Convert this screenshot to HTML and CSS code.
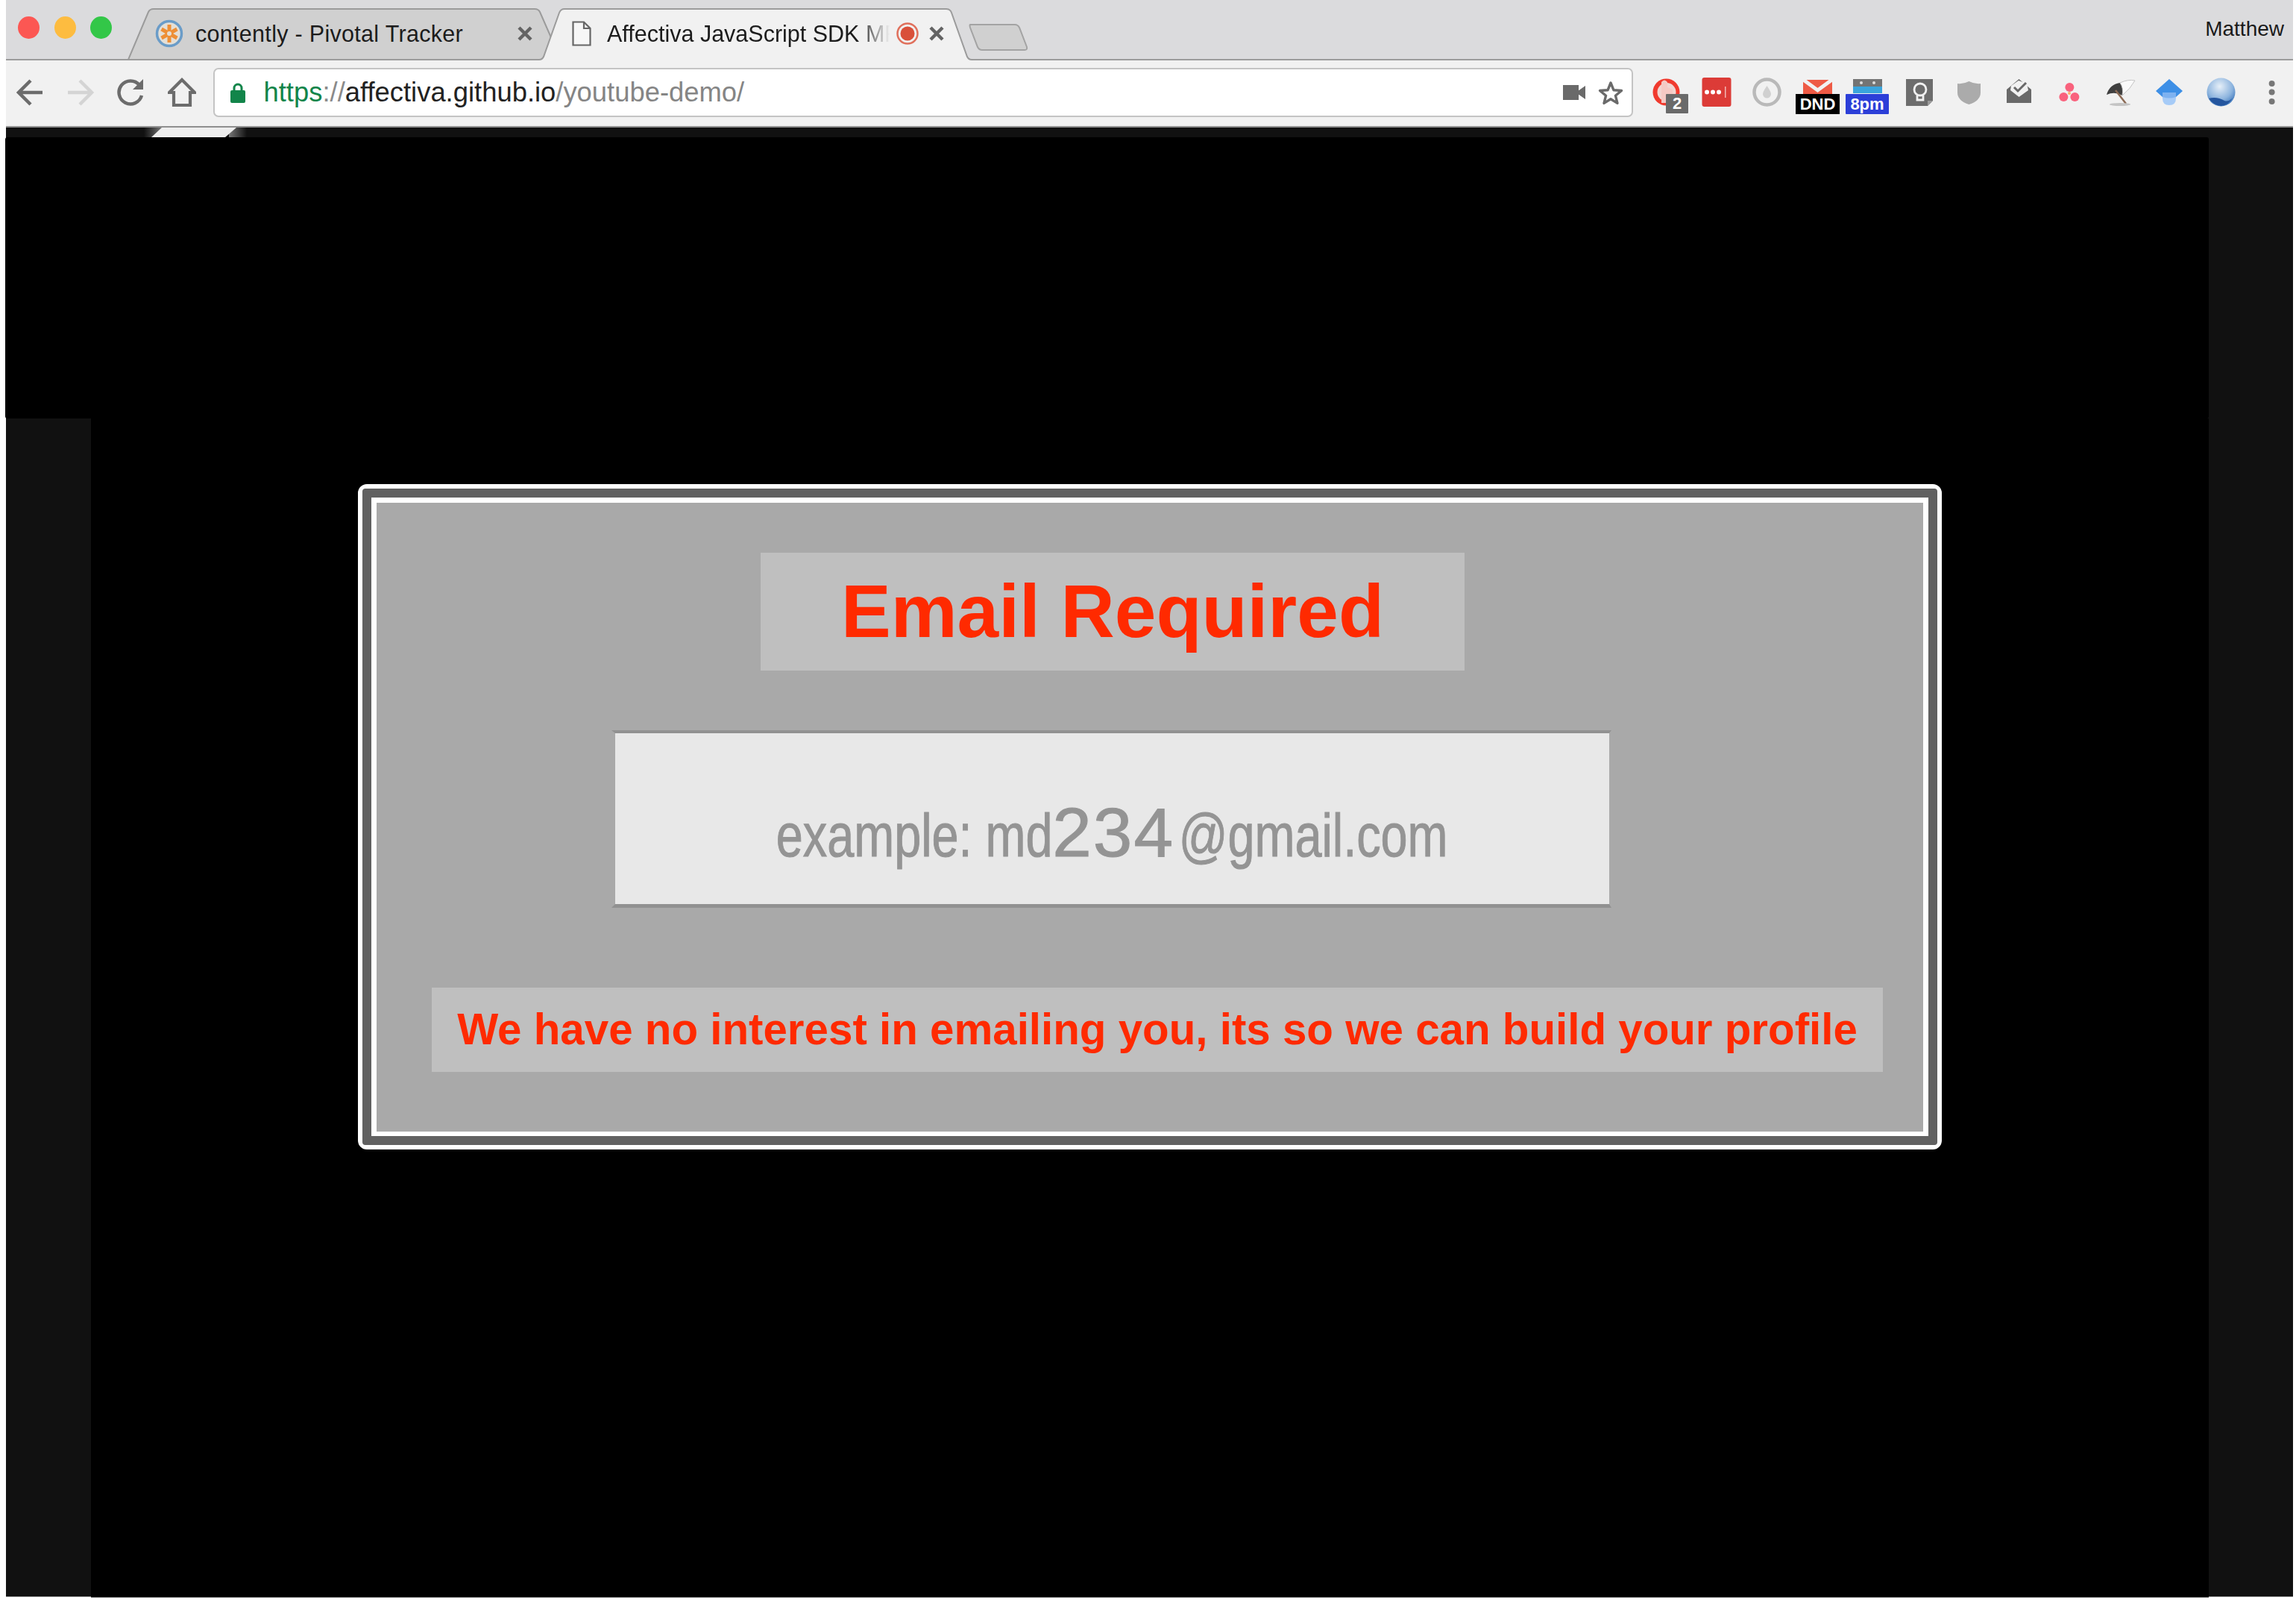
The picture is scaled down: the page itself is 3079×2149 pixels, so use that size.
FILE: index.html
```html
<!DOCTYPE html>
<html lang="en">
<head>
  <meta charset="UTF-8" />
  <title>Affectiva JavaScript SDK</title>
  <link rel="stylesheet" href="styles.css">
</head>
<body>
  <div class="window">
    <!-- tab strip -->
    <div class="tabstrip">
      <div class="lights">
        <span class="light light-red"></span>
        <span class="light light-amber"></span>
        <span class="light light-green"></span>
      </div>
      <div class="tab tab-back">
        <svg class="tab-shape" width="582" height="69" viewBox="0 0 582 69"><path d="M1 69 L28 5 Q30 1 35 1 L546 1 Q551 1 553 5 L581 69 Z" fill="#d0d0d0" stroke="#9b9b9b" stroke-width="2"/></svg>
        <svg class="favicon" width="38" height="40" viewBox="0 0 38 40">
          <circle cx="19" cy="20" r="16.5" fill="#e4dfd6" stroke="#6a9cc8" stroke-width="3.5"/>
          <g stroke="#ee8f35" stroke-width="5">
            <path d="M19 8 V32"/><path d="M8.600 14 L29.400 26"/><path d="M8.600 26 L29.400 14"/>
          </g>
          <circle cx="19" cy="20" r="3" fill="#e4dfd6"/>
        </svg>
        <span class="tab-title">contently - Pivotal Tracker</span>
        <svg class="tab-close tab-close-back" width="20" height="20" viewBox="0 0 20 20"><path d="M2 2 L18 18 M18 2 L2 18" stroke="#636363" stroke-width="4.500"/></svg>
      </div>
      <div class="tab tab-active">
        <svg class="tab-shape" width="584" height="70" viewBox="0 0 584 70"><path d="M0 69 L2 69 Q6 69 8 65 L29 6 Q31 1 36 1 L548 1 Q553 1 555 6 L576 65 Q578 69 582 69 L584 69 L584 70 L0 70 Z" fill="#f1f1f1"/><path d="M0 69 L2 69 Q6 69 8 65 L29 6 Q31 1 36 1 L548 1 Q553 1 555 6 L576 65 Q578 69 582 69 L584 69" fill="none" stroke="#9b9b9b" stroke-width="2"/></svg>
        <svg class="doc-icon" width="26" height="34" viewBox="0 0 26 34"><path d="M1.500 1.500 H16 L24.500 10 V32.500 H1.500 Z M16 1.500 V10 H24.500" fill="#f7f7f7" stroke="#666" stroke-width="2.200"/></svg>
        <span class="tab-title tab-title-fade">Affectiva JavaScript SDK MF</span>
        <svg class="rec-icon" width="30" height="32" viewBox="0 0 30 32"><circle cx="15" cy="16" r="13.500" fill="none" stroke="#e0705c" stroke-width="2.500"/><circle cx="15" cy="16" r="9.500" fill="#d9503a"/></svg>
        <svg class="tab-close tab-close-active" width="20" height="20" viewBox="0 0 20 20"><path d="M2 2 L18 18 M18 2 L2 18" stroke="#636363" stroke-width="4.500"/></svg>
      </div>
      <svg class="new-tab" width="80" height="38" viewBox="0 0 80 38"><path d="M2 2 L62 2 Q66 2 68 6 L78 32 Q79 36 75 36 L18 36 Q14 36 12 32 L2 6 Q1 2 2 2 Z" fill="#d0d0d0" stroke="#a3a3a3" stroke-width="2"/></svg>
      <span class="profile-name">Matthew</span>
    </div>

    <!-- toolbar -->
    <div class="toolbar">
      <div class="nav-buttons">
        <svg class="nav-btn" width="38" height="40" viewBox="0 0 38 40"><path d="M35 20 H5 M19 4 L3 20 L19 36" fill="none" stroke="#6c6c6c" stroke-width="4.500"/></svg>
        <svg class="nav-btn" width="38" height="40" viewBox="0 0 38 40"><path d="M1 20 H31 M17 4 L33 20 L17 36" fill="none" stroke="#d4d4d4" stroke-width="4.500"/></svg>
        <svg class="nav-btn" width="38" height="40" viewBox="0 0 38 40"><path d="M30 10 A15.500 15.500 0 1 0 33 24" fill="none" stroke="#6c6c6c" stroke-width="4.500"/><path d="M35 2 V16 H21 Z" fill="#6c6c6c"/></svg>
        <svg class="nav-btn" width="38" height="40" viewBox="0 0 38 40"><path d="M19 3 L36 20 H30 V37 H8 V20 H2 Z" fill="none" stroke="#6c6c6c" stroke-width="4.200"/></svg>
      </div>
      <div class="omnibox">
        <svg class="lock" width="20" height="28" viewBox="0 0 20 28"><path d="M5 12 V8 A5 5 0 0 1 15 8 V12" fill="none" stroke="#12854a" stroke-width="3"/><rect x="0" y="11" width="20" height="17" rx="2" fill="#12854a"/></svg>
        <span class="url"><span class="url-scheme">https</span><span class="url-sep">://</span><span class="url-host">affectiva.github.io</span><span class="url-path">/youtube-demo/</span></span>
        <svg class="omni-icon" width="30" height="20" viewBox="0 0 30 20"><rect x="0" y="0" width="21" height="20" fill="#6a6a6a"/><path d="M20 8 L30 1 V19 L20 12 Z" fill="#6a6a6a"/></svg>
        <svg class="omni-icon" width="34" height="33" viewBox="0 0 34 33"><path d="M17 3 L21 12.800 L31.500 13.500 L23.400 20.200 L26 30.400 L17 24.800 L8 30.400 L10.600 20.200 L2.500 13.500 L13 12.800 Z" fill="none" stroke="#6a6a6a" stroke-width="3.400" stroke-linejoin="round"/></svg>
      </div>
      <div class="extensions">
        <svg class="ext" viewBox="0 0 40 60"><circle cx="19.500" cy="29.500" r="18" fill="#f03a2e"/><circle cx="20" cy="29.500" r="12.500" fill="#f1d5d1"/><path d="M13 44 V16 Q17 11 21 16 V23 L28 26 V38 L22 44 Z" fill="#f4c9c4"/><rect x="19" y="32" width="30" height="26" rx="1" fill="#6a6a6a"/><text class="ext-badge-num" x="34" y="52">2</text></svg>
        <svg class="ext" viewBox="0 0 40 60"><rect x="0.500" y="10" width="39" height="39" rx="3" fill="#dc3b37"/><circle cx="7" cy="29.500" r="3" fill="#fff"/><circle cx="15" cy="29.500" r="3" fill="#fff"/><circle cx="23" cy="29.500" r="3" fill="#fff"/><rect x="31" y="22" width="1.500" height="15" fill="#f3b5b2"/></svg>
        <svg class="ext" viewBox="0 0 40 60"><circle cx="19.500" cy="29.500" r="17" fill="none" stroke="#b9b9b9" stroke-width="4.500"/><path d="M19.500 21 Q25 29 25 32 A5.500 5.500 0 0 1 14 32 Q14 29 19.500 21 Z" fill="#d0d0d0"/></svg>
        <svg class="ext" viewBox="0 0 40 60"><rect x="0" y="13" width="39" height="19" fill="#ee5a45"/><path d="M-1 12 L19.500 27 L40 12" fill="none" stroke="#f1f1f1" stroke-width="5"/><rect x="-10" y="32" width="59" height="27" fill="#000"/><text class="ext-badge-text" x="19.500" y="53">DND</text></svg>
        <svg class="ext" viewBox="0 0 40 60"><rect x="0" y="12" width="39" height="10" fill="#747474"/><circle cx="11" cy="17" r="2" fill="#ddd"/><circle cx="28" cy="17" r="2" fill="#ddd"/><rect x="0" y="22" width="39" height="9" fill="#3aa4dc"/><rect x="-10" y="32" width="58" height="27" rx="1" fill="#2c3fd8"/><text class="ext-badge-text" x="19" y="53">8pm</text></svg>
        <svg class="ext" viewBox="0 0 40 60"><path d="M3 12 H39 V41 L32 48 H3 Z" fill="#6d6d6d"/><path d="M32 48 V41 H39 Z" fill="#9a9a9a"/><circle cx="22" cy="26" r="8" fill="none" stroke="#f1f1f1" stroke-width="2.800"/><path d="M18 34 V40 H26 V34" fill="none" stroke="#f1f1f1" stroke-width="2.800"/></svg>
        <svg class="ext" viewBox="0 0 40 60"><path d="M19.500 15 Q27 19 35 18 V30 Q35 41 19.500 46 Q4 41 4 30 V18 Q12 19 19.500 15 Z" fill="#ababab"/></svg>
        <svg class="ext" viewBox="0 0 40 60"><path d="M3 26 L19.500 12 L36 26 V44 H3 Z" fill="#696969"/><path d="M9 21 L19 14 L30 18 L32 27 L19.500 36 L8 27 Z" fill="#f1f1f1"/><path d="M13 23 L18 28 L29 17" fill="none" stroke="#696969" stroke-width="3"/></svg>
        <svg class="ext" viewBox="0 0 40 60"><circle cx="19.400" cy="23" r="6" fill="#f9627d"/><circle cx="11.400" cy="36" r="6" fill="#f9627d"/><circle cx="26.400" cy="36" r="6" fill="#f9627d"/><circle cx="19" cy="31" r="2" fill="#fbb36a"/></svg>
        <svg class="ext" viewBox="0 0 40 60"><path d="M1 33 Q5 19 19 17 Q24 24 22 34 Q12 28 1 33 Z" fill="#3f3f3f"/><path d="M19 17 Q30 12 39 14 Q33 25 22 34 Q24 24 19 17 Z" fill="#fafafa" stroke="#c4c4c4"/><path d="M13 27 L27 45" stroke="#8b6a55" stroke-width="2.500"/><ellipse cx="19" cy="46" rx="14" ry="2" fill="#c4c4c4"/></svg>
        <svg class="ext" viewBox="0 0 40 60"><path d="M9 30 H27 V38 Q27 47 18 47 Q9 47 9 38 Z" fill="#a6cbf7"/><path d="M18 12 L36 28 L27 36 H9 L0 28 Z" fill="#3d8fe6"/><path d="M9 30 H27 V36 Q18 39 9 36 Z" fill="#7eb2f0"/></svg>
        <svg class="ext" viewBox="0 0 40 60"><defs><radialGradient id="globe-fill" cx="45%" cy="30%" r="70%"><stop offset="0" stop-color="#e6eff8"/><stop offset="0.65" stop-color="#8db4de"/><stop offset="1" stop-color="#3f78bd"/></radialGradient></defs><circle cx="19.500" cy="29.500" r="19" fill="url(#globe-fill)"/><path d="M3 38 Q14 35 24 41 Q30 43 35 37 Q30 47 19.500 48 Q9 47 3 38 Z" fill="#24559e"/></svg>
        <svg class="ext" viewBox="0 0 40 60"><circle cx="19.600" cy="18" r="4" fill="#777"/><circle cx="19.600" cy="29.500" r="4" fill="#777"/><circle cx="19.600" cy="42" r="4" fill="#777"/></svg>
      </div>
    </div>

    <!-- page content -->
    <div class="page">
      <div class="page-top">
        <svg class="tab-sliver" width="150" height="13" viewBox="0 0 150 13">
          <defs>
            <linearGradient id="sliver-left"><stop offset="0" stop-color="#111"/><stop offset="1" stop-color="#777"/></linearGradient>
            <linearGradient id="sliver-right"><stop offset="0" stop-color="#777"/><stop offset="1" stop-color="#111"/></linearGradient>
          </defs>
          <rect x="0" y="0" width="24" height="13" fill="url(#sliver-left)"/>
          <rect x="114" y="0" width="24" height="13" fill="url(#sliver-right)"/>
          <path d="M10 13 L24 0 H124 L109 13 Z" fill="#eeeeee"/>
        </svg>
      </div>
      <div class="hero"></div>
      <div class="stage">
        <div class="gutter gutter-left"></div>
        <main class="stage-main">
          <section class="modal">
            <div class="modal-frame">
              <div class="modal-body">
                <h1 class="modal-title">Email Required</h1>
                <div class="email-field"><span class="email-placeholder">example: md<span class="email-digits">234</span>@gmail.com</span></div>
                <p class="modal-note">We have no interest in emailing you, its so we can build your profile</p>
              </div>
            </div>
          </section>
        </main>
        <div class="gutter gutter-right"></div>
      </div>
    </div>
  </div>
</body>
</html>
```

FILE: styles.css
```css
body {
  margin: 0;
  height: 2149px;
  overflow: hidden;
  background-color: #fff;
  font-family: "Liberation Sans", Arial, sans-serif;
}
.window {
  width: 3067px;
  margin-left: 8px;
}

/* tab strip */
.tabstrip {
  box-sizing: border-box;
  height: 81px;
  display: flex;
  align-items: flex-end;
  background-color: #dbdbdd;
  border-bottom: 2px solid #9c9c9c;
}
.lights {
  display: flex;
  gap: 19.5px;
  align-self: flex-start;
  margin: 22px 0 0 16px;
}
.light {
  width: 29px;
  height: 30px;
  border-radius: 50%;
}
.light-red { background-color: #fc5753; }
.light-amber { background-color: #fdbc40; }
.light-green { background-color: #33c748; }
.tab {
  position: relative;
  height: 68px;
  display: flex;
  align-items: center;
  font-size: 30.5px;
  color: #1c1c1c;
}
.tab-shape {
  position: absolute;
  left: 0;
  top: 0;
}
.tab > *:not(.tab-shape) {
  position: relative;
}
.tab-back {
  width: 582px;
  margin-left: 21px;
}
.favicon {
  margin-left: 37px;
}
.tab-back .tab-title {
  margin-left: 16px;
  letter-spacing: 0.3px;
  white-space: nowrap;
}
.tab-close-back {
  margin-left: 73px;
}
.tab-active {
  width: 584px;
  height: 70px;
  margin: 0 0 -2px -32px;
  padding-bottom: 2px;
  box-sizing: border-box;
}
.doc-icon {
  margin-left: 46px;
}
.tab-title-fade {
  margin-left: 21px;
  white-space: nowrap;
  -webkit-mask-image: linear-gradient(90deg, #000 86%, transparent 97%);
  mask-image: linear-gradient(90deg, #000 86%, transparent 97%);
}
.rec-icon {
  margin-left: -3px;
}
.tab-close-active {
  margin-left: 14px;
}
.new-tab {
  margin: 0 0 10px -6px;
}
.profile-name {
  margin-left: auto;
  align-self: flex-start;
  margin-top: 23px;
  padding-right: 12px;
  font-size: 28px;
  color: #1a1a1a;
}

/* toolbar */
.toolbar {
  box-sizing: border-box;
  height: 90px;
  display: flex;
  align-items: center;
  padding: 0 0 2px 14px;
  background-color: #f1f1f1;
  border-bottom: 2px solid #8f8f8f;
}
.nav-buttons {
  display: flex;
  gap: 29.5px;
}
.omnibox {
  box-sizing: border-box;
  width: 1904px;
  height: 66px;
  margin-left: 23px;
  display: flex;
  align-items: center;
  padding: 0 11px 0 21px;
  background-color: #fff;
  border: 2px solid #c4c4c4;
  border-radius: 7px;
}
.url {
  flex: 1;
  margin-left: 25px;
  font-size: 36.4px;
  white-space: nowrap;
}
.url-scheme { color: #12854a; }
.url-sep { color: #8a8a8a; }
.url-host { color: #222; }
.url-path { color: #858585; }
.omni-icon {
  margin-left: 17px;
}
.extensions {
  display: flex;
  gap: 27.7px;
  margin-left: 25px;
}
.ext {
  width: 40px;
  height: 60px;
  overflow: visible;
}
.ext-badge-num {
  font-size: 22px;
  font-weight: bold;
  fill: #fff;
  text-anchor: middle;
}
.ext-badge-text {
  font-size: 22px;
  font-weight: bold;
  fill: #fff;
  text-anchor: middle;
}

/* page */
.page {
  height: 1969px;
  background-color: #111;
  border-bottom: 1px solid #8a8a8a;
}
.page-top {
  height: 13px;
}
.tab-sliver {
  display: block;
  margin-left: 185px;
}
.hero {
  width: 2955px;
  height: 377px;
  margin-left: -1px;
  background-color: #000;
  border-radius: 3px;
}
.stage {
  display: flex;
  height: 1579px;
}
.gutter-left {
  width: 114px;
}
.stage-main {
  width: 2840px;
  height: 1581px;
  padding: 88px 0 0 358px;
  box-sizing: border-box;
  background-color: #000;
  border-bottom: 1px solid #7a7a7a;
}

/* modal */
.modal {
  box-sizing: border-box;
  width: 2124px;
  border: 6px solid #fff;
  border-radius: 12px;
}
.modal-frame {
  border: 12px solid #616161;
  border-radius: 4px;
}
.modal-body {
  padding: 67px 0 80px;
  background-color: #a9a9a9;
  border: 7px solid #fff;
  border-bottom-width: 6px;
}
.modal-title {
  width: 944px;
  height: 158px;
  margin: 0 0 80px 515px;
  font-size: 100px;
  font-weight: bold;
  line-height: 156px;
  text-align: center;
  color: #ff2a00;
  background-color: #bfbfbf;
}
.email-field {
  box-sizing: border-box;
  width: 1341px;
  height: 238px;
  margin-left: 315px;
  padding-top: 83px;
  text-align: center;
  background-color: #e8e8e8;
  border-top: 4px solid #919191;
  border-bottom: 5px solid #919191;
  border-left: 5px solid #a9a9a9;
  border-right: 3px solid #a9a9a9;
}
.email-placeholder {
  display: inline-block;
  font-size: 82px;
  line-height: 100px;
  color: #949494;
  white-space: nowrap;
  -webkit-text-stroke: 1px #949494;
  transform: scaleX(0.79);
}
.email-digits {
  display: inline-block;
  width: 214px;
  font-size: 92px;
  letter-spacing: 2px;
  text-align: left;
  transform: scaleX(1.3);
  transform-origin: left;
}
.modal-note {
  box-sizing: border-box;
  width: 1946px;
  height: 113px;
  margin: 107px 0 0 74px;
  font-size: 58.3px;
  font-weight: bold;
  line-height: 111px;
  text-align: center;
  white-space: nowrap;
  color: #ff2a00;
  background-color: #bfbfbf;
}
```
